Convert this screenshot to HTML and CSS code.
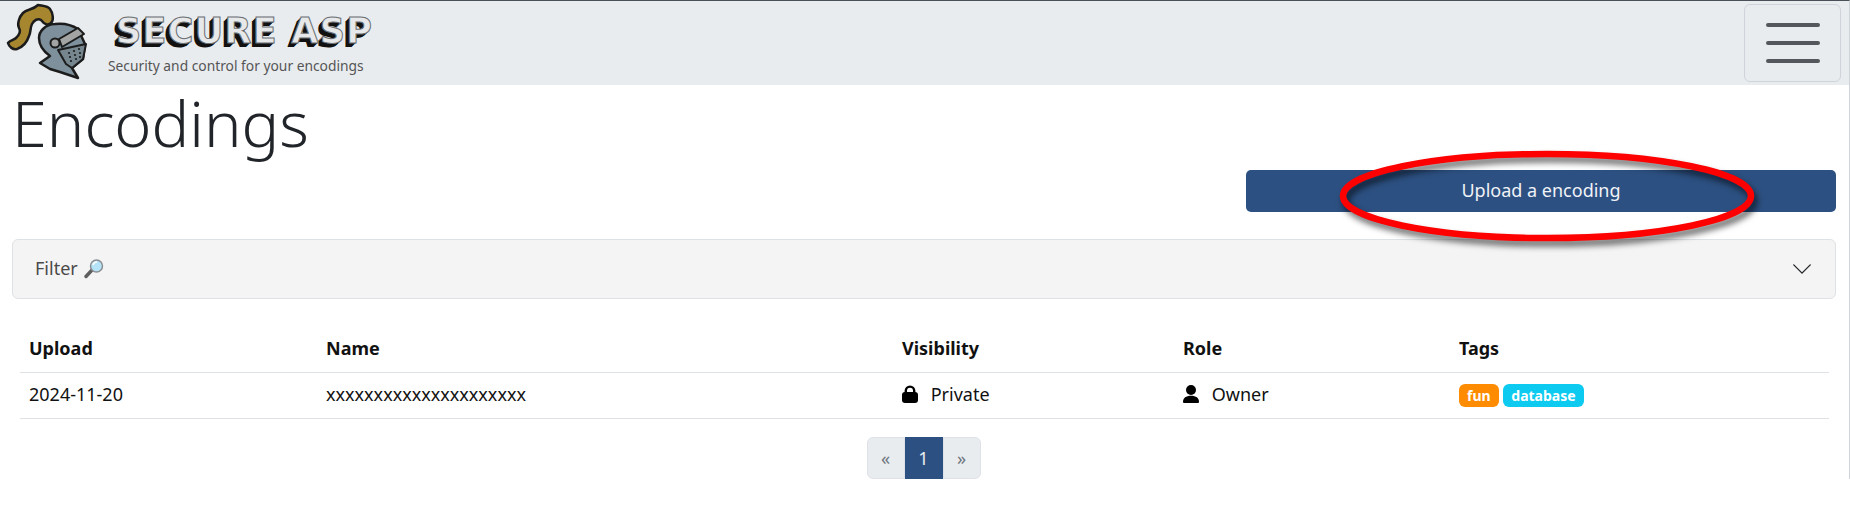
FILE: index.html
```html
<!DOCTYPE html>
<html lang="en">
<head>
    <meta charset="UTF-8">
    <title>Encodings - Secure ASP</title>
    <link rel="stylesheet" href="styles.css">
</head>
<body>
    <nav class="navbar">
        <div class="brand">
            <svg class="knight" viewBox="0 0 90 84" width="90" height="84">
                <path class="plume" d="M38 4 C43 5 48 5 50 8 C53 12 54 19 51 22 C48 25 44 23 41 19 C38 17 34 19 32 23 C30 27 31 31 29 35 C27 41 23 46 17 48 C13 49 9 46 8 42 C11 39 14 39 16 37 C20 33 21 30 19 27 C17 23 19 16 23 12 C27 8 33 9 38 4 Z"/>
                <path class="helmet" d="M43 28 C46 25 50 23 55 23 C63 22 72 24 78 28 L85 43 L83 58 L72 67 L78 77 L60 71 L50 68 L40 62 L50 55 C43 50 39 44 39 37 C39 33 41 30 43 28 Z"/>
                <path class="grate" d="M58 49 L86 43 L83 58 L72 67 L66 63 Z"/>
                <path class="visor" d="M59 38 L78 27 L84 33 L62 46 Z"/>
                <circle class="visor" cx="55" cy="42" r="4.500"/>
                <g class="holes">
                    <circle cx="69" cy="52" r="1.100"/><circle cx="74" cy="50" r="1.100"/><circle cx="79" cy="48" r="1.100"/>
                    <circle cx="70" cy="56" r="1.100"/><circle cx="75" cy="54" r="1.100"/><circle cx="80" cy="52" r="1.100"/>
                    <circle cx="71" cy="60" r="1.100"/><circle cx="76" cy="58" r="1.100"/><circle cx="80" cy="56" r="1.100"/>
                </g>
            </svg>
            <div class="brand-text">
                <div class="brand-name">SECURE ASP</div>
                <div class="brand-sub">Security and control for your encodings</div>
            </div>
        </div>
        <button class="toggler" aria-label="Menu">
            <span class="bar"></span>
            <span class="bar"></span>
            <span class="bar"></span>
        </button>
    </nav>

    <main class="content">
        <h1>Encodings</h1>

        <div class="actions">
            <a class="btn-upload" href="#">Upload a encoding</a>
            <svg class="highlight" viewBox="0 0 430 100" width="430" height="100">
                <ellipse cx="206" cy="44" rx="204" ry="42"/>
            </svg>
        </div>

        <div class="accordion">
            <span class="filter-label">Filter
                <svg class="lens" viewBox="0 0 20 20" width="20" height="20">
                    <path d="M8.500 10.500 L2 17.500" stroke="#5e5e5e" stroke-width="3.400" stroke-linecap="round"/>
                    <circle cx="12.500" cy="7" r="6" fill="#b5e3f7" stroke="#8b8f94" stroke-width="1.500"/>
                    <path d="M9 6 C9.500 4 11 3 13 3" fill="none" stroke="#fff" stroke-width="1.500"/>
                </svg>
            </span>
            <svg class="chevron" viewBox="0 0 16 16" width="22" height="22">
                <path d="M1.646 4.646a.5.5 0 0 1 .708 0L8 10.293l5.646-5.647a.5.5 0 0 1 .708.708l-6 6a.5.5 0 0 1-.708 0l-6-6a.5.5 0 0 1 0-.708z"/>
            </svg>
        </div>

        <table class="encodings">
            <thead>
                <tr>
                    <th class="col-upload">Upload</th>
                    <th class="col-name">Name</th>
                    <th class="col-visibility">Visibility</th>
                    <th class="col-role">Role</th>
                    <th class="col-tags">Tags</th>
                </tr>
            </thead>
            <tbody>
                <tr>
                    <td>2024-11-20</td>
                    <td>xxxxxxxxxxxxxxxxxxxxx</td>
                    <td>
                        <svg class="cell-icon" viewBox="0 0 16 18" width="16" height="18">
                            <path class="shackle" d="M3.800 8V5.800a4.200 4.200 0 0 1 8.400 0V8"/>
                            <rect x="0" y="7" width="16" height="11" rx="3"/>
                        </svg>
                        Private
                    </td>
                    <td>
                        <svg class="cell-icon" viewBox="0 0 16 18" width="16" height="18">
                            <circle cx="8" cy="5" r="5"/>
                            <path d="M0 17 C0 13 3 10.800 8 10.800 S16 13 16 17 Q16 18 15 18 H1 Q0 18 0 17 Z"/>
                        </svg>
                        Owner
                    </td>
                    <td>
                        <span class="badge badge-fun">fun</span>
                        <span class="badge badge-database">database</span>
                    </td>
                </tr>
            </tbody>
        </table>

        <ul class="pagination">
            <li class="page-item">«</li>
            <li class="page-item active">1</li>
            <li class="page-item">»</li>
        </ul>
    </main>
</body>
</html>
```

FILE: styles.css
```css
* {
    box-sizing: border-box;
}
body {
    margin: 0;
    border-top: 1px solid #495057;
    border-right: 1px solid #ced4da;
    background-color: white;
    color: #212529;
    font-family: "Noto Sans", sans-serif;
    font-size: 18px;
    line-height: 1.5;
}
.navbar {
    display: flex;
    justify-content: space-between;
    align-items: center;
    height: 84px;
    padding: 0 8px 0 0;
    background-color: #e9ecef;
}
.brand {
    display: flex;
    height: 84px;
}
.knight {
    flex: none;
    margin-right: 16px;
}
.plume {
    fill: #a6862f;
    stroke: #1c1c1c;
    stroke-width: 2.500;
    stroke-linejoin: round;
}
.helmet {
    fill: #7d909b;
    stroke: #1c1c1c;
    stroke-width: 2.500;
    stroke-linejoin: round;
}
.visor {
    fill: #a3a5a5;
    stroke: #1c1c1c;
    stroke-width: 2;
    stroke-linejoin: round;
}
.grate {
    fill: #76868f;
    stroke: #1c1c1c;
    stroke-width: 2;
    stroke-linejoin: round;
}
.holes {
    fill: #1c1c1c;
}
.brand-text {
    padding-left: 2px;
}
.brand-name {
    height: 55px;
    padding: 13px 0 0 8px;
    font-family: "DejaVu Sans", sans-serif;
    font-size: 35px;
    font-weight: bold;
    line-height: 35px;
    letter-spacing: 1.300px;
    white-space: nowrap;
    color: #e6e8ea;
    -webkit-text-stroke: 1px #6a6f73;
    text-shadow: -1px 1px 0 #111, -2px 2px 0 #111, -3px 3px 0 #111, -4px 4px 0 #111;
}
.brand-sub {
    font-size: 13.800px;
    line-height: 20px;
    color: #555;
    white-space: nowrap;
}
.toggler {
    display: flex;
    flex-direction: column;
    justify-content: center;
    align-items: center;
    gap: 14px;
    width: 97px;
    height: 78px;
    padding: 0;
    background: transparent;
    border: 1px solid #ced4da;
    border-radius: 6px;
}
.bar {
    display: block;
    width: 54px;
    height: 4px;
    border-radius: 2px;
    background-color: #54585c;
}
.content {
    padding: 0 13px 0 12px;
}
h1 {
    margin: 0 0 9px;
    font-size: 63px;
    font-weight: 300;
    line-height: 1.2;
}
.actions {
    position: relative;
    display: flex;
    justify-content: flex-end;
    margin-bottom: 27px;
}
.btn-upload {
    display: block;
    width: 590px;
    height: 42px;
    padding: 7px 12px;
    background-color: #2c5081;
    border-radius: 5px;
    color: #f0f3f7;
    font-size: 18px;
    line-height: 27px;
    text-align: center;
    text-decoration: none;
}
.highlight {
    position: absolute;
    top: -18px;
    left: 1329px;
    overflow: visible;
    filter: drop-shadow(3px 5px 3px rgba(0,0,0,0.6));
}
.highlight ellipse {
    fill: none;
    stroke: #ff0000;
    stroke-width: 6.500;
}
.accordion {
    display: flex;
    justify-content: space-between;
    align-items: center;
    height: 60px;
    padding: 0 22px;
    background-color: #f4f4f4;
    border: 1px solid #dee2e6;
    border-radius: 6px;
}
.filter-label {
    display: flex;
    align-items: center;
    gap: 6px;
    color: #4a4a4a;
    font-size: 18px;
}
.chevron {
    fill: #212529;
}
.encodings {
    width: 1809px;
    margin: 27px 0 18px 8px;
    border-collapse: separate;
    border-spacing: 0;
    table-layout: fixed;
    color: #111;
}
.encodings th, .encodings td {
    padding: 9px;
    border-bottom: 1px solid #dee2e6;
    text-align: left;
}
.encodings th {
    padding-bottom: 10px;
    font-weight: bold;
}
.encodings td {
    padding-top: 8px;
    padding-bottom: 10px;
}
.col-upload { width: 297px; }
.col-name { width: 576px; }
.col-visibility { width: 281px; }
.col-role { width: 276px; }
.col-tags { width: 379px; }
.cell-icon {
    margin-right: 8px;
    vertical-align: -2px;
    fill: black;
}
.shackle {
    fill: none;
    stroke: black;
    stroke-width: 2.400;
}
.badge {
    display: inline-block;
    padding: 3px 8px;
    border-radius: 6px;
    color: white;
    font-size: 14px;
    font-weight: bold;
    line-height: 17px;
}
.badge-fun {
    background-color: #ff8c00;
}
.badge-database {
    background-color: #0dcaf0;
}
.pagination {
    display: flex;
    justify-content: center;
    margin: 0;
    padding: 0 1px 0 0;
    list-style: none;
}
.page-item {
    width: 38px;
    height: 42px;
    background-color: #e9ecef;
    border: 1px solid #dee2e6;
    color: #6c757d;
    line-height: 40px;
    text-align: center;
}
.page-item:first-child {
    border-radius: 6px 0 0 6px;
}
.page-item:last-child {
    border-radius: 0 6px 6px 0;
}
.page-item.active {
    background-color: #2c5081;
    border-color: #2c5081;
    color: #e9ecef;
}
```
